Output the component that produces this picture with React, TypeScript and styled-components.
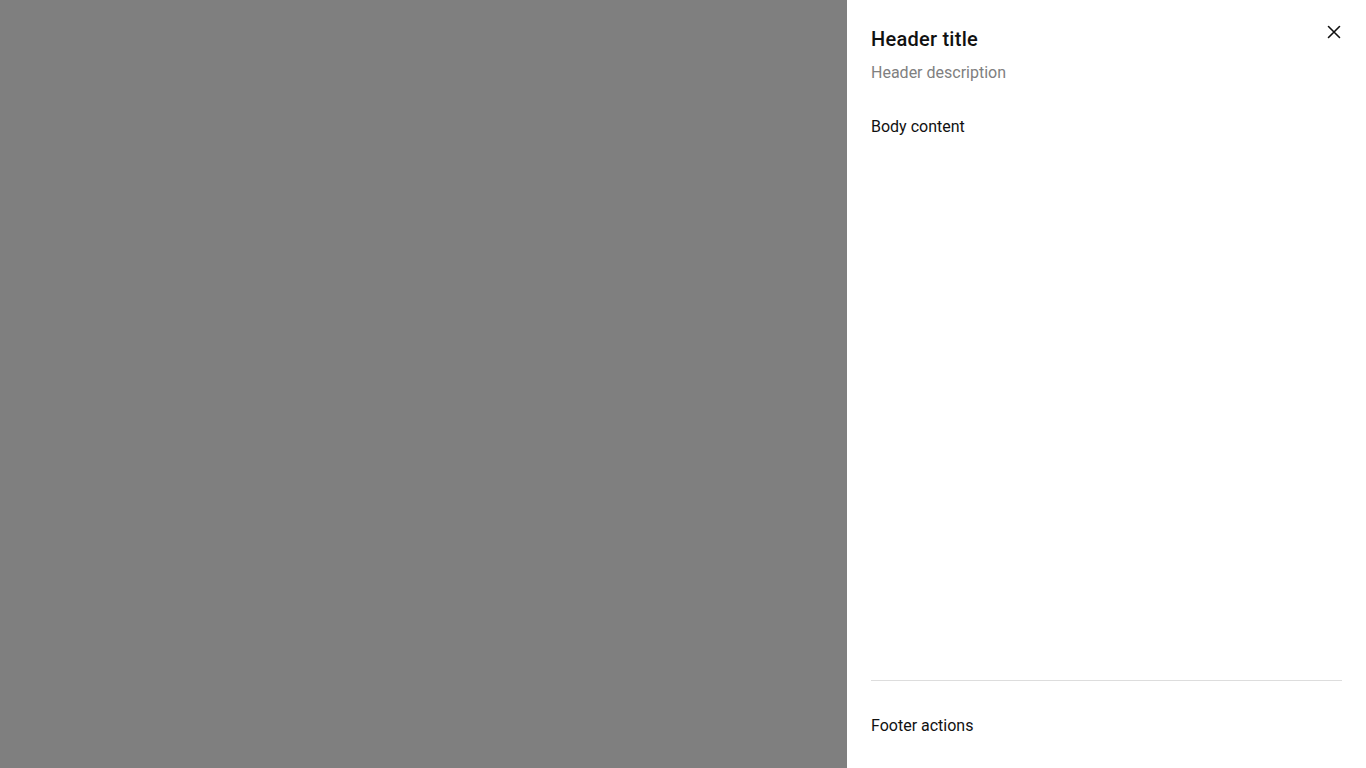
import React from 'react'
import styled, { createGlobalStyle } from 'styled-components'

const GlobalStyle = createGlobalStyle`
    html, body {
        margin: 0;
        padding: 0;
        height: 100%;
        font-family: Roboto, "Liberation Sans", sans-serif;
    }
    #root {
        height: 100%;
    }
`

const Overlay = styled.div`
    position: fixed;
    inset: 0;
    background: rgba(0, 0, 0, 0.5);
    display: flex;
    justify-content: flex-end;
`

const Drawer = styled.aside`
    width: 519px;
    height: 100%;
    background: #ffffff;
    display: flex;
    flex-direction: column;
    padding: 0 24px;
    box-sizing: border-box;
    position: relative;
`

const Header = styled.header`
    display: flex;
    flex-direction: column;
    gap: 8px;
    padding-top: 25px;
`

const Title = styled.h2`
    margin: 0;
    font-size: 20px;
    line-height: 28px;
    font-weight: 500;
    letter-spacing: 0.25px;
    color: #111111;
`

const Description = styled.p`
    margin: 0;
    font-size: 16px;
    line-height: 24px;
    color: #808080;
`

const CloseButton = styled.button`
    position: absolute;
    top: 24px;
    right: 24px;
    width: 16px;
    height: 16px;
    padding: 0;
    border: none;
    background: transparent;
    display: flex;
    align-items: center;
    justify-content: center;
    cursor: pointer;
    color: #111111;
`

const Body = styled.div`
    flex: 1;
    padding-top: 30px;
    font-size: 16px;
    line-height: 24px;
    color: #111111;
`

const Footer = styled.footer`
    border-top: 1px solid #dddddd;
    padding: 33px 0 30px;
    font-size: 16px;
    line-height: 24px;
    color: #111111;
`

const App = () => {
    return (
        <>
            <GlobalStyle />
            <Overlay>
                <Drawer>
                    <Header>
                        <Title>Header title</Title>
                        <Description>Header description</Description>
                    </Header>
                    <CloseButton aria-label="Close">
                        <svg width="14" height="14" viewBox="0 0 14 14" fill="none">
                            <path d="M1.5 1.5 L12.5 12.5 M12.5 1.5 L1.5 12.5" stroke="currentColor" strokeWidth="1.6" strokeLinecap="round" />
                        </svg>
                    </CloseButton>
                    <Body>Body content</Body>
                    <Footer>Footer actions</Footer>
                </Drawer>
            </Overlay>
        </>
    )
}

export default App
